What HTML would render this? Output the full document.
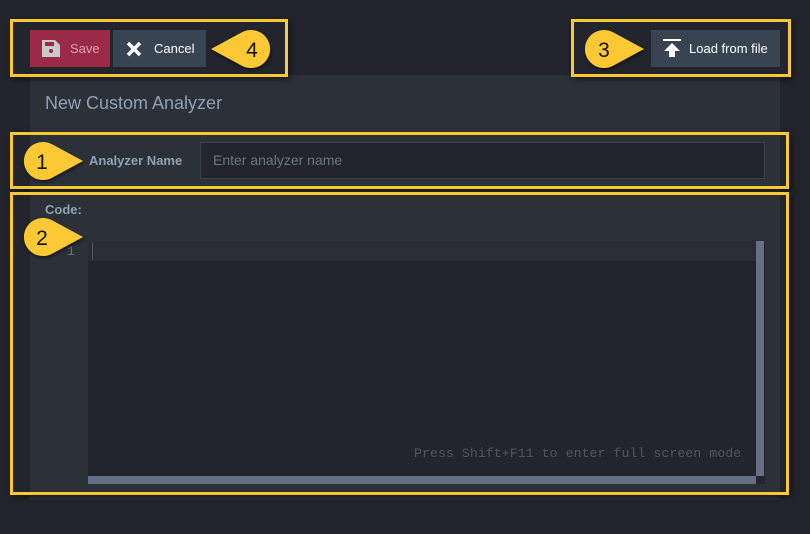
<!DOCTYPE html>
<html><head><meta charset="utf-8"><style>
*{margin:0;padding:0;box-sizing:border-box}
body{width:810px;height:534px;background:#22252b;position:relative;overflow:hidden;font-family:"Liberation Sans",sans-serif}
.abs{position:absolute}
.panel{left:30px;top:75px;width:750px;height:425px;background:#2c3138}
.box{position:absolute;border:3px solid #fcc934;box-shadow:2px 2px 6px rgba(0,0,0,.5)}
.btn{position:absolute;top:30px;height:37px;color:#fff;font-size:13px;display:flex;align-items:center}
.title{left:45px;top:93px;font-size:18px;color:#8ea1b5}
.lbl{font-weight:bold;font-size:13px;color:#8ea1b5}
.inp{left:200px;top:142px;width:565px;height:37px;background:#22252b;border:1px solid #3a414b;color:#6b7480;font-size:14px;padding:9px 12px}
.ed{left:88px;top:241px;width:677px;height:243px;background:#22252b}
</style></head><body>
<div class="abs panel"></div>
<div class="abs title">New Custom Analyzer</div>
<div class="abs lbl" style="left:89px;top:153px">Analyzer Name</div>
<div class="abs inp">Enter analyzer name</div>
<div class="abs lbl" style="left:45px;top:202px">Code:</div>
<div class="abs ed"></div>
<div class="abs" style="left:88px;top:241px;width:668px;height:20px;background:#2a2d33"></div>
<div class="abs" style="left:92px;top:243px;width:1px;height:17px;background:#555"></div>
<div class="abs" style="left:67px;top:244px;font-family:'Liberation Mono',monospace;font-size:13px;color:#6a7280">1</div>
<div class="abs" style="left:756px;top:241px;width:8px;height:235px;background:#646e85"></div>
<div class="abs" style="left:88px;top:476px;width:668px;height:8px;background:#646e85"></div>
<div class="abs" style="left:414px;top:446px;font-family:'Liberation Mono',monospace;font-size:13.3px;color:#4f565f">Press Shift+F11 to enter full screen mode</div>

<div class="btn" style="left:30px;width:80px;background:#9b2a47;color:#d9a0ae">
<svg class="abs" style="left:12px;top:10px" width="18" height="17" viewBox="0 0 18 17"><path d="M0,0H13L18,5V17H0Z" fill="#c9c9c9"/><rect x="3" y="2" width="9" height="4" fill="#9b2a47"/><circle cx="9" cy="11" r="2" fill="#9b2a47"/></svg>
<span style="position:absolute;left:40px">Save</span></div>
<div class="btn" style="left:113px;width:93px;background:#394452">
<svg class="abs" style="left:13px;top:11px" width="16" height="16" viewBox="0 0 16 16"><path d="M2,2L14,14M14,2L2,14" stroke="#fff" stroke-width="3.5"/></svg>
<span style="position:absolute;left:41px">Cancel</span></div>
<div class="btn" style="left:651px;width:129px;background:#394452">
<svg class="abs" style="left:12px;top:8px" width="18" height="20" viewBox="0 0 18 20"><rect x="0" y="1" width="18" height="2" fill="#fff"/><path d="M9,5L17,13H12V19H6V13H1Z" fill="#fff"/></svg>
<span style="position:absolute;left:38px">Load from file</span></div>

<div class="box" style="left:10px;top:19px;width:278px;height:58px"></div>
<div class="box" style="left:571px;top:19px;width:220px;height:58px"></div>
<div class="box" style="left:10px;top:132px;width:779px;height:57px"></div>
<div class="box" style="left:10px;top:192px;width:779px;height:303px"></div>

<svg class="abs" style="left:0;top:0" width="810" height="534">
<defs><filter id="s"><feDropShadow dx="1" dy="2" stdDeviation="1.5" flood-opacity=".5"/></filter></defs>
<g fill="#fcc934" filter="url(#s)">
<path transform="translate(251,49) scale(-1,1)" d="M40,0L9,-16.7A19,19 0 1 0 9,16.7Z"/>
<path transform="translate(604,49)" d="M40,0L9,-16.7A19,19 0 1 0 9,16.7Z"/>
<path transform="translate(43,161)" d="M40,0L9,-16.7A19,19 0 1 0 9,16.7Z"/>
<path transform="translate(43,237)" d="M40,0L9,-16.7A19,19 0 1 0 9,16.7Z"/>
</g>
<g fill="#111" font-family="Liberation Sans" font-size="21" text-anchor="middle">
<text x="252" y="57">4</text><text x="604" y="57">3</text><text x="42" y="169">1</text><text x="42" y="245">2</text>
</g></svg>
</body></html>
